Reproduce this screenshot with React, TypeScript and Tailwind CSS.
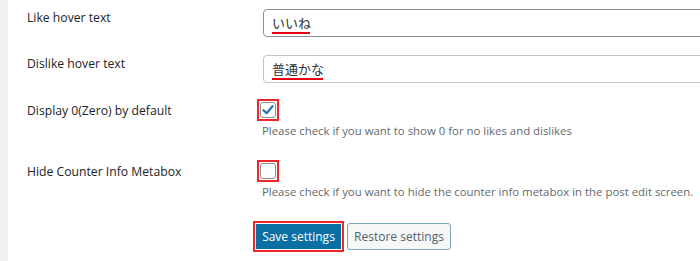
import React from "react";

const font = { fontFamily: '"Open Sans", "Noto Sans CJK JP", sans-serif' };

function Label({ children }: { children: React.ReactNode }) {
  return (
    <div className="w-[255px] shrink-0 whitespace-nowrap pl-[19px] text-[12.2px] leading-[20px] text-[#1d2327]">
      {children}
    </div>
  );
}

function TextField({ value, underline, dark }: { value: string; underline: number; dark?: boolean }) {
  return (
    <div
      className={
        dark
          ? "relative mr-[-20px] h-[28px] flex-1 rounded-[4px] border border-[#8c8f94] bg-white pl-[8px] text-[13px] leading-[26px] text-[#2c3338]"
          : "relative mr-[-20px] h-[28px] flex-1 rounded-[4px] border border-[#c3c4c7] bg-white pl-[8px] text-[13px] leading-[26px] text-[#2c3338]"
      }
    >
      <span>{value}</span>
      <div
        className="absolute left-[8px] top-[22px] h-[2px] bg-[#e60012]"
        style={{ width: underline }}
      />
    </div>
  );
}

function Check({ checked }: { checked: boolean }) {
  return (
    <div className="ml-[-6px] flex h-[22px] w-[22px] items-center justify-center border-2 border-[#f0262b]">
      <div className="flex h-[16px] w-[16px] items-center justify-center rounded-[3px] border border-[#8c8f94] bg-white">
        {checked && (
          <svg width="14" height="14" viewBox="0 0 14 14">
            <path d="M2.5 7.2 L5.6 10.2 L11.5 3.2" fill="none" stroke="#2271b1" strokeWidth="2.2" strokeLinecap="round" strokeLinejoin="round" />
          </svg>
        )}
      </div>
    </div>
  );
}

export default function App() {
  return (
    <div className="flex h-[261px] w-[700px] overflow-hidden bg-white" style={font}>
      <div className="w-[8px] shrink-0 bg-[#f0f0f1]" />
      <div className="flex flex-1 flex-col">
        <div className="mt-[8px] flex items-start">
          <Label>Like hover text</Label>
          <div className="mt-[1px] flex flex-1">
            <TextField value="いいね" underline={38} dark />
          </div>
        </div>
        <div className="mt-[17px] flex items-start">
          <Label>Dislike hover text</Label>
          <div className="mt-[1px] flex flex-1">
            <TextField value="普通かな" underline={51} />
          </div>
        </div>
        <div className="mt-[16px] flex items-start">
          <div className="pt-[2px]">
            <Label>Display 0(Zero) by default</Label>
          </div>
          <div className="flex flex-col">
            <Check checked />
            <div className="ml-[-1px] mt-[1px] whitespace-nowrap text-[11.4px] leading-[18px] text-[#646970]">
              Please check if you want to show 0 for no likes and dislikes
            </div>
          </div>
        </div>
        <div className="mt-[20px] flex items-start">
          <div className="pt-[2px]">
            <Label>Hide Counter Info Metabox</Label>
          </div>
          <div className="flex flex-col">
            <Check checked={false} />
            <div className="ml-[-1px] mt-[1px] whitespace-nowrap text-[11.4px] leading-[18px] text-[#646970]">
              Please check if you want to hide the counter info metabox in the post edit screen.
            </div>
          </div>
        </div>
        <div className="mt-[20px] flex items-center pl-[245px]">
          <div className="border-2 border-[#f0262b] p-[1px]">
            <div className="flex h-[25px] w-[85px] items-center justify-center bg-[#0a6fa3] text-[12px] text-white">
              Save settings
            </div>
          </div>
          <div className="ml-[3px] flex h-[27px] w-[104px] items-center justify-center rounded-[3px] border border-[#7ea7c0] bg-[#f6f7f7] text-[12px] text-[#50626e]">
            Restore settings
          </div>
        </div>
      </div>
    </div>
  );
}
